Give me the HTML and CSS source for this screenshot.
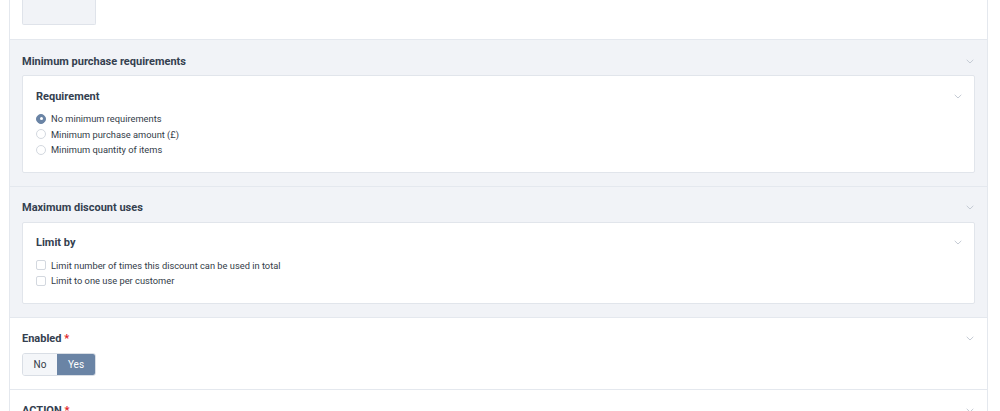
FILE: index.html
```html
<!DOCTYPE html>
<html>
<head>
<meta charset="utf-8">
<link rel="stylesheet" href="styles.css">
</head>
<body>
<div class="form">
  <section class="sec sec-white sec-top">
    <div class="stub"></div>
  </section>

  <section class="sec sec-gray">
    <div class="sec-head">
      <span class="sec-title">Minimum purchase requirements</span>
      <svg class="chev" viewBox="0 0 8 5"><path d="M0.7 0.8 L4 4 L7.3 0.8"/></svg>
    </div>
    <div class="card">
      <div class="card-head">
        <span class="card-title">Requirement</span>
        <svg class="chev" viewBox="0 0 8 5"><path d="M0.7 0.8 L4 4 L7.3 0.8"/></svg>
      </div>
      <ul class="opts">
        <li><span class="radio on"></span>No minimum requirements</li>
        <li><span class="radio"></span>Minimum purchase amount (£)</li>
        <li><span class="radio"></span>Minimum quantity of items</li>
      </ul>
    </div>
  </section>

  <section class="sec sec-gray">
    <div class="sec-head">
      <span class="sec-title">Maximum discount uses</span>
      <svg class="chev" viewBox="0 0 8 5"><path d="M0.7 0.8 L4 4 L7.3 0.8"/></svg>
    </div>
    <div class="card">
      <div class="card-head">
        <span class="card-title">Limit by</span>
        <svg class="chev" viewBox="0 0 8 5"><path d="M0.7 0.8 L4 4 L7.3 0.8"/></svg>
      </div>
      <ul class="opts">
        <li><span class="check"></span>Limit number of times this discount can be used in total</li>
        <li><span class="check"></span>Limit to one use per customer</li>
      </ul>
    </div>
  </section>

  <section class="sec sec-white">
    <div class="sec-head">
      <span class="sec-title">Enabled <span class="req">*</span></span>
      <svg class="chev" viewBox="0 0 8 5"><path d="M0.7 0.8 L4 4 L7.3 0.8"/></svg>
    </div>
    <div class="toggle">
      <span class="tg no">No</span>
      <span class="tg yes">Yes</span>
    </div>
  </section>

  <section class="sec sec-white">
    <div class="sec-head">
      <span class="sec-title">ACTION <span class="req">*</span></span>
      <svg class="chev" viewBox="0 0 8 5"><path d="M0.7 0.8 L4 4 L7.3 0.8"/></svg>
    </div>
  </section>
</div>
</body>
</html>
```
FILE: styles.css
```css
* { box-sizing: border-box; }
html, body { margin: 0; padding: 0; background: #fff; }
body {
  font-family: Roboto, "Liberation Sans", Arial, sans-serif;
  color: #2f3a4a;
  overflow: hidden;
  height: 411px;
}
.form {
  margin-left: 9px;
  width: 979px;
  border-left: 1px solid #e4e8ee;
  border-right: 1px solid #e4e8ee;
}
.sec {
  border-bottom: 1px solid #e4e8ee;
  padding: 12px 12px 13px 12px;
}
.sec-white { background: #fff; }
.sec-gray { background: #f1f3f7; }
.sec-top { padding-top: 0; padding-bottom: 14px; }
.stub {
  width: 74px;
  height: 25px;
  background: #f1f3f7;
  border: 1px solid #dfe3ea;
  border-top: none;
  border-radius: 0 0 2px 2px;
}
.sec-head, .card-head {
  display: flex;
  align-items: center;
  justify-content: space-between;
  height: 18px;
}
.sec-head { margin-bottom: 5px; padding-right: 1px; }
.sec-title, .card-title {
  font-size: 11px;
  font-weight: 700;
  color: #34404f;
}
.req { color: #e02424; }
.chev {
  width: 8px;
  height: 5px;
  fill: none;
  stroke: #c5cbd4;
  stroke-width: 1;
}
.card {
  background: #fff;
  border: 1px solid #e1e5eb;
  border-radius: 2px;
  padding: 11px 12px 14px 13px;
}
.card-head { height: 18px; padding-right: 0; margin-bottom: 6px; }
.opts {
  list-style: none;
  margin: 0;
  padding: 0;
}
.opts li {
  display: flex;
  align-items: center;
  height: 15.5px;
  font-size: 9.3px;
  color: #333c48;
}
.radio, .check {
  width: 10px;
  height: 10px;
  border: 1px solid #d3d8df;
  background: #fff;
  margin-right: 5px;
  flex: none;
}
.radio { border-radius: 50%; }
.radio.on {
  background: #6a84a5;
  border-color: #6a84a5;
  position: relative;
}
.radio.on::after {
  content: "";
  position: absolute;
  left: 2.5px;
  top: 2.5px;
  width: 3px;
  height: 3px;
  border-radius: 50%;
  background: #fff;
}
.check { border-radius: 2px; }
.toggle {
  display: inline-flex;
  height: 23px;
  border: 1px solid #d9dee5;
  border-radius: 3px;
  overflow: hidden;
  font-size: 10px;
}
.tg {
  display: flex;
  align-items: center;
  justify-content: center;
}
.tg.no { width: 34px; background: #f4f6f9; color: #333c48; }
.tg.yes { width: 38px; background: #6a84a5; color: #fff; }
```
